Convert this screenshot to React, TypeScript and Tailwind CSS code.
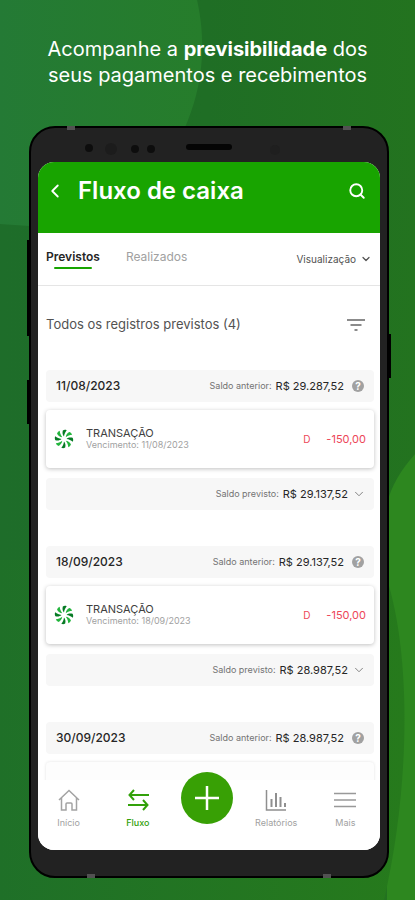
import { ChevronDown, ChevronLeft, Search } from "lucide-react";

interface Entry {
  date: string;
  previous: string;
  expected?: string;
}

const entries: Entry[] = [
  { date: "11/08/2023", previous: "R$ 29.287,52", expected: "R$ 29.137,52" },
  { date: "18/09/2023", previous: "R$ 29.137,52", expected: "R$ 28.987,52" },
  { date: "30/09/2023", previous: "R$ 28.987,52" },
];

/* ---------------- ICONS ---------------- */

function PinwheelIcon() {
  return (
    <svg viewBox="0 0 20 20" className="w-5 h-5 shrink-0" aria-hidden="true">
      {[0, 45, 90, 135, 180, 225, 270, 315].map((angle, index) => (
        <path
          key={angle}
          d="M10 7.500C8.600 6 8.200 3.800 8.800 1.400c1.200-.7 2.600-.8 3.900-.2C11.200 3 10.300 5 10 7.500z"
          fill={index % 2 ? "#22b53c" : "#067a24"}
          transform={`rotate(${angle} 10 10)`}
        />
      ))}
    </svg>
  );
}

function FilterIcon() {
  return (
    <svg viewBox="0 0 20 16" className="w-5 h-4" fill="none" stroke="#666" strokeWidth="1.5">
      <path d="M1 3h18M4.500 8h11M8.500 13h3" />
    </svg>
  );
}

function HomeIcon() {
  return (
    <svg viewBox="0 0 24 24" className="w-6 h-6" fill="none" stroke="#a3a3a3" strokeWidth="1.500">
      <path d="M2 12 12 2.500 22 12M4.500 10v12H9v-6q0-1 1-1h4q1 0 1 1v6h4.500V10" />
    </svg>
  );
}

function FlowIcon() {
  return (
    <svg viewBox="0 0 24 24" className="w-6 h-6" fill="none" stroke="#32a10a" strokeWidth="2">
      <path d="M23 7H3.500M8 2 3.500 7 8 12M2 17h19.500M17 12l4.500 5-4.500 5" />
    </svg>
  );
}

function ChartIcon() {
  return (
    <svg viewBox="0 0 24 24" className="w-6 h-6" fill="none" stroke="#8f8f8f" strokeWidth="1.500">
      <path d="M2.500 2v20H22" />
      <path d="M7.500 11v8M12 5v14M16.500 9v10M21 15v4" strokeWidth="2" />
    </svg>
  );
}

function MenuIcon() {
  return (
    <svg viewBox="0 0 24 24" className="w-6 h-6" fill="none" stroke="#999" strokeWidth="1.500">
      <path d="M1 5.500h22M1 12h22M1 18.500h22" />
    </svg>
  );
}

function Backdrop() {
  return (
    <svg
      viewBox="0 0 415 900"
      preserveAspectRatio="none"
      className="absolute inset-0 w-full h-full"
      aria-hidden="true"
    >
      <defs>
        <linearGradient id="base" x1="0" y1="0" x2="1" y2="0">
          <stop offset="0" stopColor="#1e6d2a" />
          <stop offset="0.5" stopColor="#1f6e25" />
          <stop offset="1" stopColor="#23731f" />
        </linearGradient>
        <linearGradient id="floor" x1="0" y1="0" x2="1" y2="0">
          <stop offset="0" stopColor="#1f7028" />
          <stop offset="1" stopColor="#267a1c" />
        </linearGradient>
        <linearGradient id="blob" x1="0" y1="0" x2="1" y2="0">
          <stop offset="0" stopColor="#247a35" />
          <stop offset="1" stopColor="#267d2b" />
        </linearGradient>
      </defs>
      <rect width="415" height="900" fill="url(#base)" />
      <path d="M0 0h197c8 35 8 78-9 120-25 66-100 108-158 106L0 224z" fill="url(#blob)" />
      <path d="M415 454c-14 16-24 32-28 50v396h28z" fill="#2d871f" />
      <path d="M380 560c32 75 32 220 4 340H0V560z" fill="url(#floor)" />
    </svg>
  );
}

/* ---------------- LIST ---------------- */

function EntryGroup({ entry }: { entry: Entry }) {
  return (
    <section className="mb-9">
      <div className="flex items-center justify-between h-8 px-[10px] rounded bg-[#f7f7f7]">
        <h3 className="text-xs font-medium text-neutral-800">{entry.date}</h3>
        <div className="flex items-center">
          <span className="text-[9px] text-neutral-500">Saldo anterior:</span>
          <span className="ml-1 text-[11px] text-neutral-800">{entry.previous}</span>
          <button
            aria-label="Ajuda"
            className="ml-2 w-3 h-3 rounded-full bg-neutral-400 text-white text-[10px] leading-3 font-bold"
          >
            ?
          </button>
        </div>
      </div>

      {entry.expected ? (
        <>
          <div className="flex items-center h-[58px] mt-2 px-2 rounded bg-white shadow-[0_1px_4px_rgba(0,0,0,0.25)]">
            <PinwheelIcon />
            <div className="ml-3 flex-1">
              <p className="text-[11px] leading-3 text-neutral-700">TRANSAÇÃO</p>
              <p className="text-[9px] leading-3 text-neutral-400">Vencimento: {entry.date}</p>
            </div>
            <span className="text-[10px] text-[#ed4658]">D</span>
            <span className="ml-4 text-[11px] text-[#ed4658]">-150,00</span>
          </div>

          <div className="flex items-center justify-end h-8 mt-[10px] pr-2 rounded bg-[#f7f7f7]">
            <span className="text-[9px] text-neutral-500">Saldo previsto:</span>
            <span className="ml-1 text-[11px] text-neutral-800">{entry.expected}</span>
            <button aria-label="Expandir" className="ml-1">
              <ChevronDown size={14} strokeWidth={1.5} className="text-neutral-500" />
            </button>
          </div>
        </>
      ) : (
        <div className="h-14 mt-2 rounded bg-[#fdfdfd] shadow-[0_0_3px_rgba(0,0,0,0.12)]" />
      )}
    </section>
  );
}

/* ---------------- PAGE ---------------- */

export default function App() {
  return (
    <div className="relative h-screen overflow-hidden flex flex-col font-[Inter,sans-serif]">
      <Backdrop />

      <h1 className="relative pt-9 text-center text-xl leading-[26px] text-white">
        Acompanhe a <strong className="font-bold">previsibilidade</strong> dos
        <br />
        seus pagamentos e recebimentos
      </h1>

      {/* PHONE */}

      <div className="relative flex-1 min-h-0 flex flex-col mt-[38px] mb-[22px] ml-[29px] mr-[26px] px-[7px] pb-[26px] border-2 border-black rounded-[26px] bg-[#222]">
        <span className="absolute -left-1 top-28 w-1 h-24 bg-black" />
        <span className="absolute -left-1 top-[252px] w-1 h-11 bg-black" />
        <span className="absolute -right-1 top-[206px] w-1 h-11 bg-black" />
        <span className="absolute left-9 -top-0.5 w-2 h-1 bg-neutral-600" />
        <span className="absolute right-9 -top-0.5 w-2 h-1 bg-neutral-600" />
        <span className="absolute left-14 -bottom-0.5 w-2 h-1 bg-neutral-600" />
        <span className="absolute right-14 -bottom-0.5 w-2 h-1 bg-neutral-600" />

        <div className="relative h-[34px] shrink-0">
          <svg viewBox="0 0 342 34" className="w-full h-full" aria-hidden="true">
            <circle cx="51" cy="20" r="4" fill="#0d0d0d" />
            <circle cx="73" cy="21" r="6" fill="#1c1c1c" />
            <circle cx="97" cy="21" r="4" fill="#0d0d0d" />
            <circle cx="113" cy="21" r="4" fill="#0d0d0d" />
            <rect x="148" y="16" width="46" height="6" rx="3" fill="#050505" />
            <circle cx="237" cy="22" r="5" fill="#1f1f1f" />
          </svg>
        </div>

        {/* SCREEN */}

        <div className="flex-1 min-h-0 flex flex-col overflow-hidden rounded-2xl bg-white">
          <header className="flex items-start h-[71px] shrink-0 pl-1.5 pr-2 pt-[13px] bg-[#18a400] text-white">
            <button aria-label="Voltar" className="h-8">
              <ChevronLeft size={22} />
            </button>
            <h2 className="ml-3 flex-1 text-2xl leading-8 font-semibold">Fluxo de caixa</h2>
            <button aria-label="Buscar" className="h-8 mr-1.5">
              <Search size={18} strokeWidth={2.5} />
            </button>
          </header>

          <nav className="flex items-start h-[53px] shrink-0 pl-2 pr-2 pt-4 border-b border-neutral-200">
            <button className="flex flex-col items-center text-xs leading-4 font-semibold text-neutral-800">
              Previstos
              <span className="w-[38px] h-0.5 mt-0.5 rounded bg-[#18a400]" />
            </button>
            <button className="ml-[26px] text-xs leading-4 text-neutral-400">Realizados</button>
            <button className="ml-auto flex items-center gap-1 pt-0.5 text-[10px] leading-4 text-neutral-600">
              Visualização
              <ChevronDown size={12} strokeWidth={2.5} />
            </button>
          </nav>

          <main className="flex-1 min-h-0 overflow-hidden pl-2 pr-1.5">
            <div className="flex items-center justify-between h-8 mt-[23px] mb-[29px]">
              <p className="text-[13px] text-neutral-600">Todos os registros previstos (4)</p>
              <button aria-label="Filtrar" className="mr-2">
                <FilterIcon />
              </button>
            </div>
            {entries.map((entry) => (
              <EntryGroup key={entry.date} entry={entry} />
            ))}
          </main>

          {/* BOTTOM BAR */}

          <footer className="relative grid grid-cols-5 h-[70px] shrink-0 -ml-1 bg-white text-[9px] text-neutral-400">
            <button className="flex flex-col items-center gap-1 pt-2">
              <HomeIcon />
              Início
            </button>
            <button className="flex flex-col items-center gap-1 pt-2 text-[#32a10a] font-medium">
              <FlowIcon />
              Fluxo
            </button>
            <button
              aria-label="Adicionar"
              className="justify-self-center -mt-2 w-[52px] h-[52px] rounded-full bg-[#38a005] flex items-center justify-center"
            >
              <svg viewBox="0 0 24 24" className="w-6 h-6" stroke="#fff" strokeWidth="2.500">
                <path d="M12 0v24M0 12h24" />
              </svg>
            </button>
            <button className="flex flex-col items-center gap-1 pt-2">
              <ChartIcon />
              Relatórios
            </button>
            <button className="flex flex-col items-center gap-1 pt-2">
              <MenuIcon />
              Mais
            </button>
          </footer>
        </div>
      </div>
    </div>
  );
}
